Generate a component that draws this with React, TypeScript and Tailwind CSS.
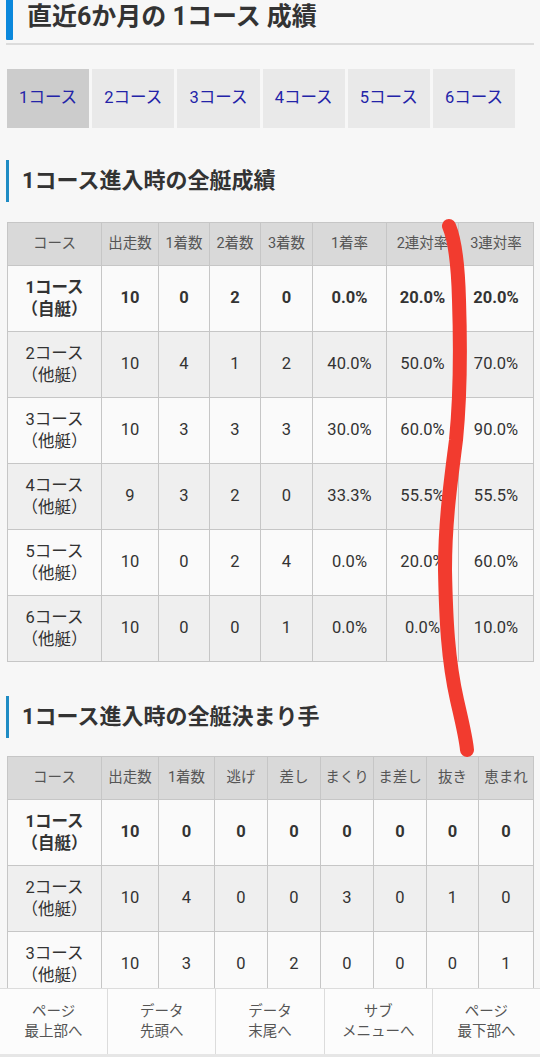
import React from "react";

const FONT = 'Roboto, "Noto Sans CJK JP", "Noto Sans", sans-serif';

const t1Cols = [94, 57, 51, 51, 52, 74, 72, 75];
const t1Head = ["コース", "出走数", "1着数", "2着数", "3着数", "1着率", "2連対率", "3連対率"];
const t1Rows: string[][] = [
  ["1", "10", "0", "2", "0", "0.0%", "20.0%", "20.0%"],
  ["2", "10", "4", "1", "2", "40.0%", "50.0%", "70.0%"],
  ["3", "10", "3", "3", "3", "30.0%", "60.0%", "90.0%"],
  ["4", "9", "3", "2", "0", "33.3%", "55.5%", "55.5%"],
  ["5", "10", "0", "2", "4", "0.0%", "20.0%", "60.0%"],
  ["6", "10", "0", "0", "1", "0.0%", "0.0%", "10.0%"],
];

const t2Cols = [94, 57, 56, 53, 53, 53, 53, 52, 55];
const t2Head = ["コース", "出走数", "1着数", "逃げ", "差し", "まくり", "ま差し", "抜き", "恵まれ"];
const t2Rows: string[][] = [
  ["1", "10", "0", "0", "0", "0", "0", "0", "0"],
  ["2", "10", "4", "0", "0", "3", "0", "1", "0"],
  ["3", "10", "3", "0", "2", "0", "0", "0", "1"],
];

function DataTable({ cols, head, rows }: { cols: number[]; head: string[]; rows: string[][] }) {
  return (
    <table className="table-fixed border-collapse w-[526px] ml-[7px] text-center">
      <colgroup>
        {cols.map((w, i) => (
          <col key={i} style={{ width: w }} />
        ))}
      </colgroup>
      <thead>
        <tr className="h-[43px] bg-[#d9d9d9]">
          {head.map((h, i) => (
            <th
              key={i}
              className="border border-[#c6c6c6] font-normal text-[14.5px] text-[#555] p-0 whitespace-nowrap"
            >
              {h}
            </th>
          ))}
        </tr>
      </thead>
      <tbody>
        {rows.map((r, ri) => {
          const self = ri === 0;
          return (
            <tr key={ri} className={`h-[66px] ${ri % 2 === 0 ? "bg-[#fafafa]" : "bg-[#efefef]"}`}>
              {r.map((c, ci) => (
                <td
                  key={ci}
                  className={`border border-[#c6c6c6] p-0 text-[#333] whitespace-nowrap ${self ? "font-bold" : "font-normal"} ${
                    ci === 0 ? "text-[16.5px] leading-[22px]" : "text-[16.5px]"
                  }`}
                >
                  {ci === 0 ? (
                    <>
                      <div>{c}コース</div>
                      <div>{self ? "（自艇）" : "（他艇）"}</div>
                    </>
                  ) : (
                    c
                  )}
                </td>
              ))}
            </tr>
          );
        })}
      </tbody>
    </table>
  );
}

function SectionHeading({ text }: { text: string }) {
  return (
    <div className="flex items-center h-[42px] ml-[6px]">
      <div className="w-[3px] h-full bg-[#1f8cc4]" />
      <div className="ml-[13px] text-[22px] font-bold text-[#333] leading-none">{text}</div>
    </div>
  );
}

export default function App() {
  const tabs = ["1コース", "2コース", "3コース", "4コース", "5コース", "6コース"];
  const nav = [
    ["ページ", "最上部へ"],
    ["データ", "先頭へ"],
    ["データ", "末尾へ"],
    ["サブ", "メニューへ"],
    ["ページ", "最下部へ"],
  ];
  return (
    <div className="relative w-[540px] min-h-[1057px] bg-[#f7f7f7] overflow-hidden" style={{ fontFamily: FONT }}>
      {/* Title */}
      <div className="flex items-start h-[40px] ml-[6px]">
        <div className="w-[7px] h-[40px] bg-[#0b88dc] rounded-b-[1px]" />
        <div className="ml-[14px] text-[25px] font-bold text-[#333] leading-[33px]">
          直近6か月の 1コース 成績
        </div>
      </div>
      <div className="mx-[6px] mt-[3px] h-[2px] bg-[#dcdcdc]" />

      {/* Tabs */}
      <div className="flex gap-[3px] ml-[7px] mt-[24px] w-[508px]">
        {tabs.map((t, i) => (
          <div
            key={i}
            className={`flex-1 h-[59px] flex items-center justify-center text-[16.5px] text-[#2323a8] ${
              i === 0 ? "bg-[#cccccc]" : "bg-[#e9e9e9]"
            }`}
          >
            {t}
          </div>
        ))}
      </div>

      <div className="mt-[32px]">
        <SectionHeading text="1コース進入時の全艇成績" />
      </div>
      <div className="mt-[20px]">
        <DataTable cols={t1Cols} head={t1Head} rows={t1Rows} />
      </div>

      <div className="mt-[34px]">
        <SectionHeading text="1コース進入時の全艇決まり手" />
      </div>
      <div className="mt-[18px]">
        <DataTable cols={t2Cols} head={t2Head} rows={t2Rows} />
      </div>

      {/* red annotation stroke */}
      <svg className="absolute left-0 top-0 pointer-events-none" width="540" height="1057">
        <path
          d="M449,226 C455,240 458,262 459,300 C461,360 460,400 456,440 C451,480 445,520 445,570 C446,620 448,660 457,700 C462,722 466,738 467,750"
          fill="none"
          stroke="#f23b2f"
          strokeWidth="14"
          strokeLinecap="round"
        />
      </svg>

      {/* Bottom nav */}
      <div className="fixed left-0 bottom-0 w-[540px] h-[69px] bg-[#fcfcfc] border-t border-[#dcdcdc] flex border-b-[3px] border-b-[#e6e6e6]">
        {nav.map((n, i) => (
          <div
            key={i}
            className={`flex-1 flex flex-col items-center justify-center text-[14.5px] leading-[20px] text-[#555] ${
              i > 0 ? "border-l border-[#dcdcdc]" : ""
            }`}
          >
            <div>{n[0]}</div>
            <div>{n[1]}</div>
          </div>
        ))}
      </div>
    </div>
  );
}
